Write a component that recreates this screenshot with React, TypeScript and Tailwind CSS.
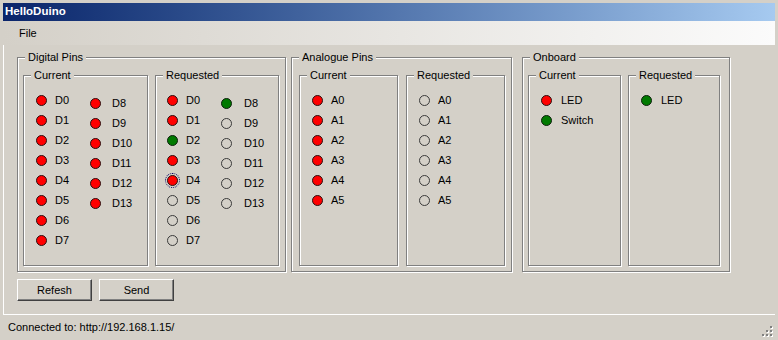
import React from "react";

type PinState = "on" | "high" | "off";

type Pin = { label: string; state: PinState; focus?: boolean };

const font = { fontFamily: '"Liberation Sans", Arial, sans-serif' };

function Dot({ state, focus }: { state: PinState; focus?: boolean }) {
  const fill =
    state === "on"
      ? "bg-[#ff0000] border-[#2a1010]"
      : state === "high"
        ? "bg-[#007a00] border-[#0c200c]"
        : "bg-transparent border-[#3a3a3a]";
  return (
    <span className="relative flex h-[11px] w-[11px] shrink-0">
      <span className={`h-[11px] w-[11px] rounded-full border ${fill}`} />
      {focus && (
        <span className="absolute -inset-[2px] rounded-full border border-dotted border-[#000060]" />
      )}
    </span>
  );
}

function PinColumn({ pins, gap, width, offset }: { pins: Pin[]; gap: string; width?: string; offset?: string }) {
  return (
    <div className={`flex flex-col ${width ?? ""} ${offset ?? ""}`}>
      {pins.map((p) => (
        <div key={p.label} className="flex h-[20px] items-center">
          <Dot state={p.state} focus={p.focus} />
          <span className={`${gap} text-[11px] leading-[13px] text-black`}>{p.label}</span>
        </div>
      ))}
    </div>
  );
}

function GroupBox({
  title,
  className,
  children,
}: {
  title: string;
  className: string;
  children: React.ReactNode;
}) {
  return (
    <fieldset
      className={`m-0 min-w-0 border border-[#808080] p-0 shadow-[inset_1px_1px_0_#fff,1px_1px_0_#fff] ${className}`}
    >
      <legend className="ml-[7px] bg-[#d4d0c8] px-[3px] text-[11px] leading-[13px] text-black">{title}</legend>
      {children}
    </fieldset>
  );
}

const pins = (prefix: string, from: number, to: number, state: PinState): Pin[] =>
  Array.from({ length: to - from + 1 }, (_, i) => ({ label: `${prefix}${from + i}`, state }));

const reqDigitalA: Pin[] = [
  { label: "D0", state: "on" },
  { label: "D1", state: "on" },
  { label: "D2", state: "high" },
  { label: "D3", state: "on" },
  { label: "D4", state: "on", focus: true },
  { label: "D5", state: "off" },
  { label: "D6", state: "off" },
  { label: "D7", state: "off" },
];

const reqDigitalB: Pin[] = [{ label: "D8", state: "high" }, ...pins("D", 9, 13, "off")];

function Button({ label }: { label: string }) {
  return (
    <button className="flex h-[22px] w-[75px] items-center justify-center border border-b-[#404040] border-l-white border-r-[#404040] border-t-white bg-[#d4d0c8] text-[11px] text-black shadow-[inset_-1px_-1px_0_#808080]">
      {label}
    </button>
  );
}

export default function App() {
  return (
    <div className="flex h-[340px] w-[778px] flex-col overflow-hidden bg-[#d4d0c8] px-[3px] pt-[3px]" style={font}>
      <div className="flex h-[18px] shrink-0 items-center bg-gradient-to-r from-[#0a246a] to-[#a6caf0] pl-[2px]">
        <span className="text-[11.5px] font-bold leading-none text-white">HelloDuino</span>
      </div>

      <div className="flex h-[24px] shrink-0 items-center bg-gradient-to-r from-[#d4d0c8] to-[#fbfbfb] pl-[16px]">
        <span className="text-[11px] text-black">File</span>
      </div>

      <div className="flex flex-1 flex-col border-l border-white pl-[13px]">
        <div className="mt-[6px] flex">
          <GroupBox title="Digital Pins" className="h-[221px] w-[269px]">
            <div className="flex gap-[7px] pl-[5px] pt-[5px]">
              <GroupBox title="Current" className="h-[197px] w-[125px]">
                <div className="flex pl-[12px] pt-[8px]">
                  <PinColumn pins={pins("D", 0, 7, "on")} gap="ml-[8px]" width="w-[54px]" />
                  <PinColumn pins={pins("D", 8, 13, "on")} gap="ml-[11px]" offset="pt-[3px]" />
                </div>
              </GroupBox>
              <GroupBox title="Requested" className="h-[197px] w-[124px]">
                <div className="flex pl-[11px] pt-[8px]">
                  <PinColumn pins={reqDigitalA} gap="ml-[8px]" width="w-[54px]" />
                  <PinColumn pins={reqDigitalB} gap="ml-[12px]" offset="pt-[3px]" />
                </div>
              </GroupBox>
            </div>
          </GroupBox>

          <GroupBox title="Analogue Pins" className="ml-[5px] h-[221px] w-[221px]">
            <div className="flex gap-[8px] pl-[7px] pt-[5px]">
              <GroupBox title="Current" className="h-[197px] w-[99px]">
                <div className="flex pl-[12px] pt-[8px]">
                  <PinColumn pins={pins("A", 0, 5, "on")} gap="ml-[8px]" />
                </div>
              </GroupBox>
              <GroupBox title="Requested" className="h-[197px] w-[99px]">
                <div className="flex pl-[12px] pt-[8px]">
                  <PinColumn pins={pins("A", 0, 5, "off")} gap="ml-[8px]" />
                </div>
              </GroupBox>
            </div>
          </GroupBox>

          <GroupBox title="Onboard" className="ml-[10px] h-[221px] w-[208px]">
            <div className="flex gap-[7px] pl-[5px] pt-[5px]">
              <GroupBox title="Current" className="h-[197px] w-[93px]">
                <div className="flex pl-[12px] pt-[8px]">
                  <PinColumn
                    pins={[
                      { label: "LED", state: "on" },
                      { label: "Switch", state: "high" },
                    ]}
                    gap="ml-[9px]"
                  />
                </div>
              </GroupBox>
              <GroupBox title="Requested" className="h-[197px] w-[92px]">
                <div className="flex pl-[12px] pt-[8px]">
                  <PinColumn pins={[{ label: "LED", state: "high" }]} gap="ml-[9px]" />
                </div>
              </GroupBox>
            </div>
          </GroupBox>
        </div>

        <div className="mt-[7px] flex gap-[7px]">
          <Button label="Refesh" />
          <Button label="Send" />
        </div>
      </div>

      <div className="flex h-[26px] shrink-0 items-center justify-between border-t border-white pl-[5px]">
        <span className="text-[11px] text-black">Connected to: http://192.168.1.15/</span>
        <svg width="13" height="13" viewBox="0 0 13 13" className="mr-[1px] self-end mb-[2px]">
          {[
            [9, 1],
            [5, 5],
            [9, 5],
            [1, 9],
            [5, 9],
            [9, 9],
          ].map(([x, y]) => (
            <g key={`${x}-${y}`}>
              <rect x={x + 1} y={y + 1} width="2" height="2" fill="#ffffff" />
              <rect x={x} y={y} width="2" height="2" fill="#808080" />
            </g>
          ))}
        </svg>
      </div>
    </div>
  );
}
